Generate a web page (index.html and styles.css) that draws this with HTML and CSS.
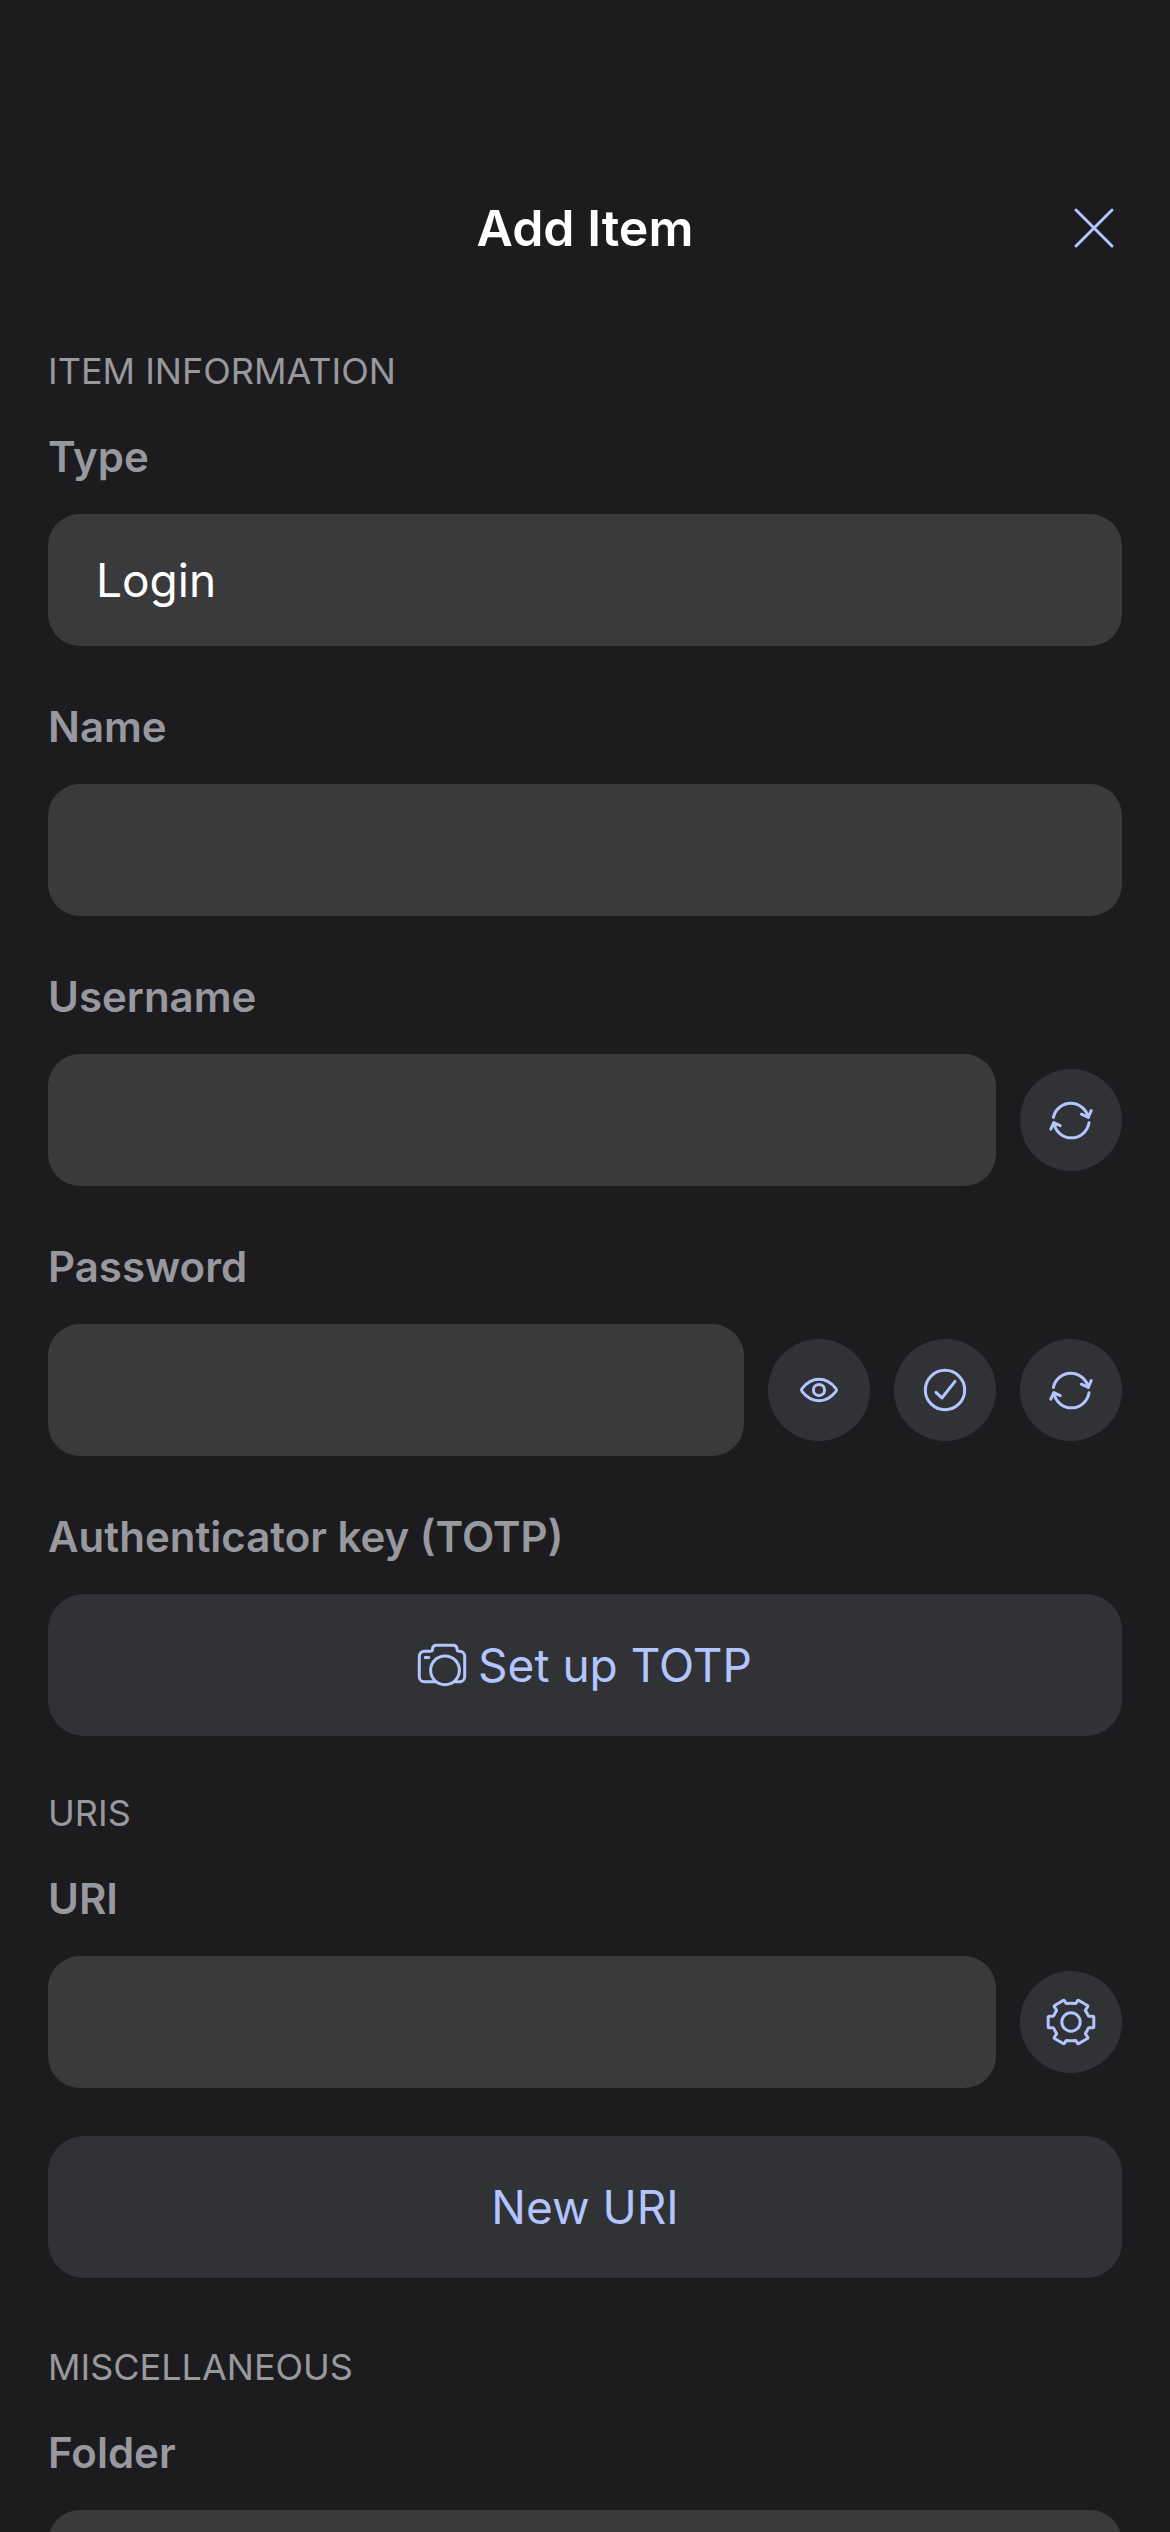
FILE: index.html
```html
<!DOCTYPE html>
<html lang="en">
<head>
  <meta charset="utf-8">
  <meta name="viewport" content="width=device-width, initial-scale=1">
  <title>Add Item</title>
  <link rel="stylesheet" href="styles.css">
</head>
<body>
  <svg class="symbols" aria-hidden="true">
    <symbol id="icon-refresh" viewBox="0 0 48 48">
      <path d="M6.4 21.4A17.8 17.8 0 0 1 41.2 21.3M34.4 18.2L41.3 21.5L44.2 14.6M42 26.7A17.8 17.8 0 0 1 6.8 26.7M13.2 29.6L6.8 26.5L3.8 33.2"/>
    </symbol>
  </svg>

  <div class="screen">
    <header class="navbar">
      <h1 class="navbar-title">Add Item</h1>
      <button class="close" type="button" aria-label="Close">
        <svg class="icon close-icon" viewBox="0 0 40 40"><path d="M2 2L38 38M38 2L2 38"/></svg>
      </button>
    </header>

    <main class="form">
      <section class="section">
        <h2 class="section-title">ITEM INFORMATION</h2>
        <div class="field">
          <label class="label" for="type">Type</label>
          <select class="control" id="type">
            <option>Login</option>
          </select>
        </div>
        <div class="field">
          <label class="label" for="name">Name</label>
          <input class="control" id="name" type="text">
        </div>
        <div class="field">
          <label class="label" for="username">Username</label>
          <div class="row">
            <input class="control" id="username" type="text">
            <button class="round" type="button" aria-label="Generate username">
              <svg class="icon"><use href="#icon-refresh"/></svg>
            </button>
          </div>
        </div>
        <div class="field">
          <label class="label" for="password">Password</label>
          <div class="row">
            <input class="control" id="password" type="password">
            <button class="round" type="button" aria-label="Show password">
              <svg class="icon" viewBox="0 0 48 48">
                <path d="M7 22.6C11 17.5 17 13.3 24 13.3S37 17.5 41 22.6Q42.1 24 41 25.4C37 30.5 31 34.7 24 34.7S11 30.5 7 25.4Q5.9 24 7 22.6Z"/>
                <circle cx="24" cy="24" r="5.6"/>
              </svg>
            </button>
            <button class="round" type="button" aria-label="Check password">
              <svg class="icon" viewBox="0 0 48 48">
                <circle cx="24" cy="24" r="19.7"/>
                <path d="M15 26.3L20.9 32L34 15.4"/>
              </svg>
            </button>
            <button class="round" type="button" aria-label="Generate password">
              <svg class="icon"><use href="#icon-refresh"/></svg>
            </button>
          </div>
        </div>
        <div class="field">
          <label class="label" for="totp">Authenticator key (TOTP)</label>
          <button class="wide" id="totp" type="button">
            <svg class="icon camera-icon" viewBox="0 0 48 42">
              <path d="M18 37.7H6.3a5 5 0 0 1-5-5V12.3a5 5 0 0 1 5-5H12q2.5 0 2.5-2q0-4 4-4H35q4 0 4 4q0 2 2.5 2h.2a5 5 0 0 1 5 5V32.7a5 5 0 0 1-5 5H36M7.200 13.5H10.8"/>
              <circle cx="27" cy="26.3" r="14.4"/>
            </svg>
            Set up TOTP
          </button>
        </div>
      </section>

      <section class="section">
        <h2 class="section-title">URIS</h2>
        <div class="field">
          <label class="label" for="uri">URI</label>
          <div class="row">
            <input class="control" id="uri" type="url">
            <button class="round" type="button" aria-label="URI options">
              <svg class="icon" viewBox="0 0 48 48">
                <path d="M45.8 18.2Q46.8 18.2 46.8 19.2V28.8Q46.8 29.8 45.8 29.8H42.2Q41.4 29.8 41 30.7Q40 33.2 38.6 35Q38.2 35.6 38.6 36.2L40.6 39.2Q41.2 40 40.4 40.5L31.9 45.5Q31 46 30.5 45.2L29.2 43Q28.8 42.3 28 42.4Q24 43 20 42.4Q19.2 42.3 18.8 43L17.5 45.2Q17 46 16.1 45.5L7.6 40.5Q6.8 40 7.4 39.2L9.4 36.2Q9.8 35.6 9.4 35Q8 33.2 7 30.7Q6.6 29.8 5.8 29.8H2.2Q1.2 29.8 1.2 28.8V19.2Q1.2 18.2 2.2 18.2H5.8Q6.6 18.2 7 17.3Q8 14.8 9.4 13Q9.8 12.4 9.4 11.8L7.4 8.8Q6.8 8 7.6 7.5L16.1 2.5Q17 2 17.5 2.8L18.8 5Q19.2 5.7 20 5.6Q24 5 28 5.6Q28.8 5.7 29.2 5L30.5 2.8Q31 2 31.9 2.5L40.4 7.5Q41.2 8 40.6 8.8L38.6 11.8Q38.2 12.4 38.6 13Q40 14.8 41 17.3Q41.4 18.2 42.2 18.2Z"/>
                <circle cx="24" cy="24" r="9.2"/>
              </svg>
            </button>
          </div>
        </div>
        <button class="wide" type="button">New URI</button>
      </section>

      <section class="section section-last">
        <h2 class="section-title">MISCELLANEOUS</h2>
        <div class="field">
          <label class="label" for="folder">Folder</label>
          <select class="control" id="folder">
            <option></option>
          </select>
        </div>
      </section>
    </main>
  </div>
</body>
</html>
```
FILE: styles.css
```css
:root {
  --background: #1c1c1e;
  --field: #3a3a3c;
  --button: #313236;
  --muted: #98989f;
  --accent: #b2c5ff;
}

* {
  box-sizing: border-box;
}

body {
  margin: 0;
  background: var(--background);
  color: #fff;
  font-family: Inter, "Liberation Sans", sans-serif;
}

button,
input,
select {
  margin: 0;
  border: 0;
  font: inherit;
}

.symbols {
  display: none;
}

.screen {
  display: flex;
  flex-direction: column;
  height: 100vh;
}

/* The top padding clears the status bar. */
.navbar {
  display: grid;
  grid-template-columns: 1fr auto 1fr;
  align-items: center;
  padding: 144px 48px 0;
}

.navbar-title {
  grid-column: 2;
  margin: 0;
  font-size: 50px;
  font-weight: 600;
  line-height: 168px;
}

.close {
  display: flex;
  justify-self: end;
  padding: 8px;
  background: none;
  color: var(--accent);
}

.icon {
  width: 48px;
  height: 48px;
  overflow: visible;
  fill: none;
  stroke: currentColor;
  stroke-width: 3;
  stroke-linecap: round;
  stroke-linejoin: round;
}

.close-icon {
  width: 40px;
  height: 40px;
  stroke-width: 3;
}

.camera-icon {
  height: 42px;
}

.form {
  flex: 1;
  min-height: 0;
  padding: 38px 48px;
  overflow-y: auto;
  scrollbar-width: none;
}

.section {
  margin-bottom: 56px;
}

.section-title {
  margin: 0 0 40px;
  color: var(--muted);
  font-size: 36px;
  font-weight: 400;
  line-height: 42px;
}

.section + .section-last {
  margin-top: 68px;
}

.field + .field {
  margin-top: 56px;
}

.field + .wide {
  margin-top: 48px;
}

.label {
  display: block;
  margin-bottom: 32px;
  color: var(--muted);
  font-size: 42px;
  font-weight: 600;
  line-height: 50px;
}

.row {
  display: flex;
  align-items: center;
  gap: 24px;
}

.control {
  display: block;
  flex: 1;
  width: 100%;
  min-width: 0;
  height: 132px;
  padding: 0 48px;
  border-radius: 32px;
  background: var(--field);
  color: #fff;
  font-size: 46px;
  appearance: none;
}

.round {
  display: flex;
  flex: none;
  align-items: center;
  justify-content: center;
  width: 102px;
  height: 102px;
  padding: 0;
  border-radius: 50%;
  background: var(--button);
  color: var(--accent);
}

.wide {
  display: flex;
  align-items: center;
  justify-content: center;
  gap: 12px;
  width: 100%;
  height: 142px;
  border-radius: 36px;
  background: var(--button);
  color: var(--accent);
  font-size: 46px;
}
```
